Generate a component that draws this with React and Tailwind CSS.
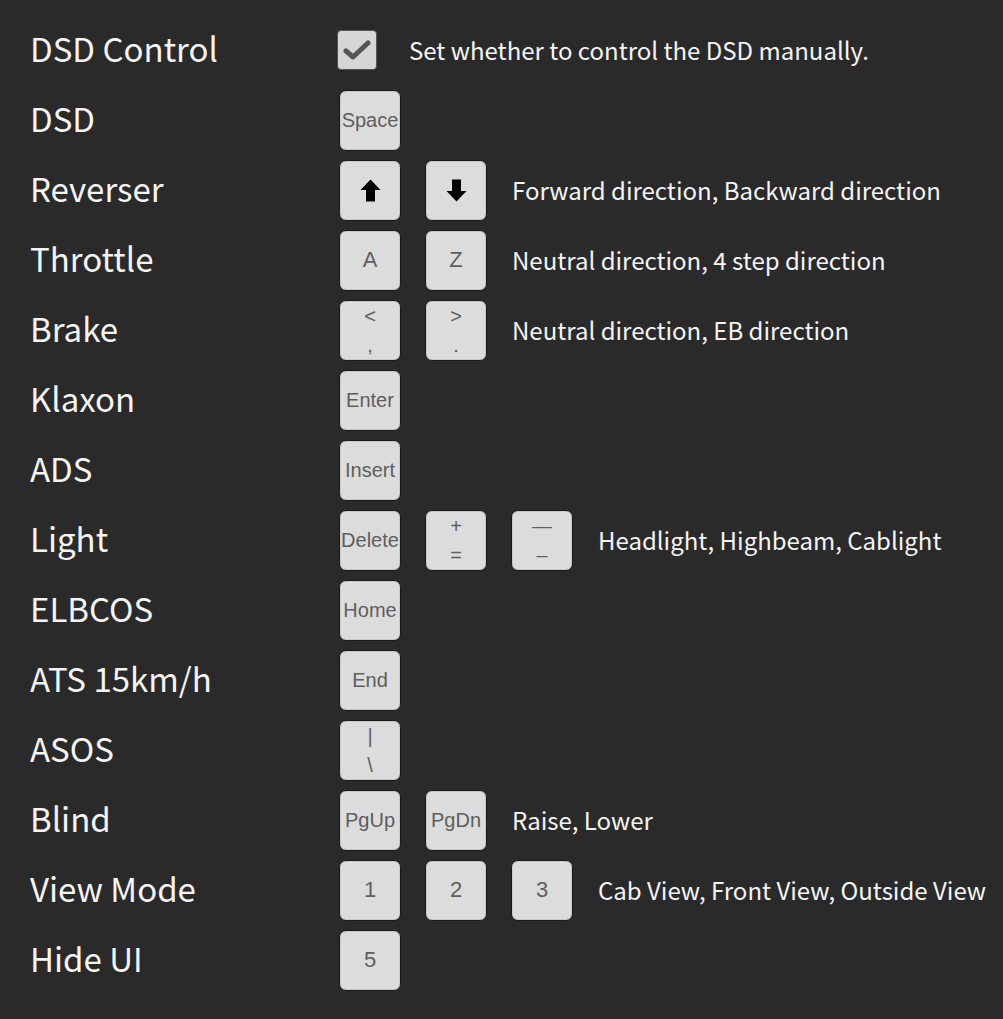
import React from 'react';

const ArrowUp = () => (
    <svg width="21" height="23" viewBox="0 0 21 23">
        <path d="M10.5 0.5 L20.5 11 L15 11 L15 22.5 L6 22.5 L6 11 L0.5 11 Z" fill="#000" />
    </svg>
);

const ArrowDown = () => (
    <svg width="21" height="23" viewBox="0 0 21 23">
        <path d="M10.5 22.5 L20.5 12 L15 12 L15 0.5 L6 0.5 L6 12 L0.5 12 Z" fill="#000" />
    </svg>
);

const Key = ({ children, top, bottom }) => {
    const single = typeof children === 'string' && children.length === 1;
    return (
        <div className="w-[62px] h-[61px] shrink-0 rounded-[7px] bg-[#dcdcdc] border border-[#1a1a1a] shadow-[inset_0_0_0_1px_#c8c8c8] flex flex-col items-center justify-center text-[#5e5e5e] leading-none font-['Liberation_Sans',Arial,sans-serif]">
            {top !== undefined ? (
                <>
                    <span className="text-[20px] leading-none">{top}</span>
                    <span className="text-[20px] leading-none mt-[9px]">{bottom}</span>
                </>
            ) : (
                <span className={single ? 'text-[22px] leading-none' : 'text-[20px] leading-none'}>{children}</span>
            )}
        </div>
    );
};

const Checkbox = () => (
    <div className="w-[40px] h-[40px] ml-[-2px] rounded-[4px] bg-[#d6d6d6] border border-[#555] flex items-center justify-center">
        <svg width="28" height="24" viewBox="0 0 28 24">
            <path d="M3 13 L10 19 L25 5" fill="none" stroke="#555" strokeWidth="5" strokeLinecap="round" strokeLinejoin="round" />
        </svg>
    </div>
);

const rows = [
    { label: 'DSD Control', check: true, desc: 'Set whether to control the DSD manually.' },
    { label: 'DSD', keys: [{ t: 'Space' }] },
    { label: 'Reverser', keys: [{ t: <ArrowUp /> }, { t: <ArrowDown /> }], desc: 'Forward direction, Backward direction' },
    { label: 'Throttle', keys: [{ t: 'A' }, { t: 'Z' }], desc: 'Neutral direction, 4 step direction' },
    { label: 'Brake', keys: [{ top: '<', bottom: ',' }, { top: '>', bottom: '.' }], desc: 'Neutral direction, EB direction' },
    { label: 'Klaxon', keys: [{ t: 'Enter' }] },
    { label: 'ADS', keys: [{ t: 'Insert' }] },
    { label: 'Light', keys: [{ t: 'Delete' }, { top: '+', bottom: '=' }, { top: '—', bottom: '–' }], desc: 'Headlight, Highbeam, Cablight' },
    { label: 'ELBCOS', keys: [{ t: 'Home' }] },
    { label: 'ATS 15km/h', keys: [{ t: 'End' }] },
    { label: 'ASOS', keys: [{ top: '|', bottom: '\\' }] },
    { label: 'Blind', keys: [{ t: 'PgUp' }, { t: 'PgDn' }], desc: 'Raise, Lower' },
    { label: 'View Mode', keys: [{ t: '1' }, { t: '2' }, { t: '3' }], desc: 'Cab View, Front View, Outside View' },
    { label: 'Hide UI', keys: [{ t: '5' }] },
];

export default function App() {
    return (
        <div className="w-[1003px] h-[1019px] bg-[#2a2a2a] pt-[15px] pl-[30px] overflow-hidden font-['Noto_Sans_CJK_JP','Noto_Sans',sans-serif]">
            {rows.map((row) => (
                <div key={row.label} className="h-[70px] flex items-center">
                    <div className="w-[309px] shrink-0 text-[#f4f4f4] text-[33px] leading-none mt-[-4px]">
                        {row.label}
                    </div>
                    {row.check ? (
                        <Checkbox />
                    ) : (
                        <div className="flex gap-[24px]">
                            {row.keys.map((k, i) => (
                                <Key key={i} top={k.top} bottom={k.bottom}>{k.t}</Key>
                            ))}
                        </div>
                    )}
                    {row.desc && (
                        <div className={`${row.check ? 'ml-[32px]' : 'ml-[25px]'} text-[#f4f4f4] text-[24px] leading-none whitespace-nowrap`}>
                            {row.desc}
                        </div>
                    )}
                </div>
            ))}
        </div>
    );
}
